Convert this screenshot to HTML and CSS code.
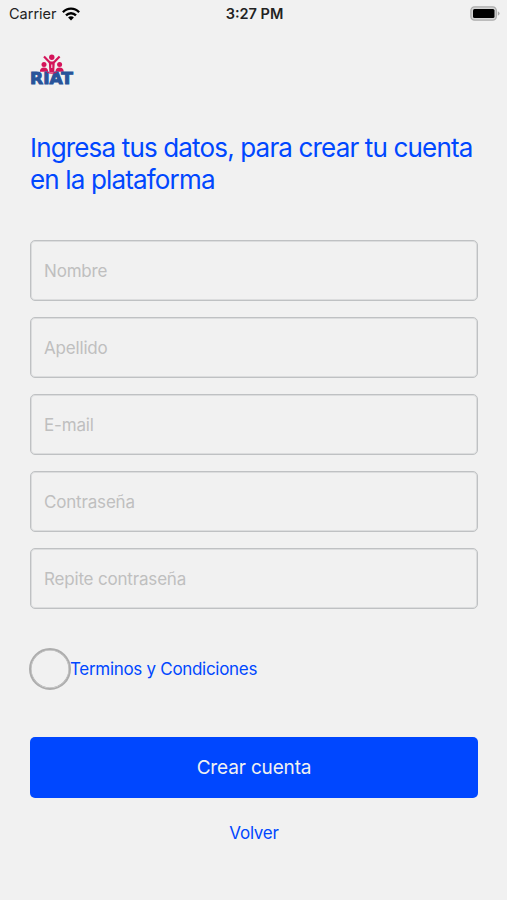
FILE: index.html
```html
<!DOCTYPE html>
<html lang="es">
<head>
    <meta charset="UTF-8">
    <meta name="viewport" content="width=device-width, initial-scale=1.0">
    <title>RIAT - Crear cuenta</title>
    <link rel="stylesheet" href="styles.css">
</head>
<body>
    <header class="status-bar">
        <div class="carrier">
            <span>Carrier</span>
            <svg class="wifi" width="18" height="14" viewBox="0 0 18 14" fill="none" stroke="#000" stroke-width="2.3">
                <path d="M0.9 5.3C5.4 0.5 12.6 0.5 17.1 5.3"/>
                <path d="M4 8.4C6.8 5.5 11.2 5.5 14 8.4"/>
                <path d="M6.1 10.5C7.7 8.9 10.3 8.9 11.9 10.5L9 13.5Z" fill="#000" stroke="none"/>
            </svg>
        </div>
        <div class="time">3:27 PM</div>
        <svg class="battery" width="30" height="15" viewBox="0 0 30 15">
            <rect x="0.9" y="0.9" width="25.4" height="13.2" rx="3.6" fill="#d4d4d4" stroke="#ababab" stroke-width="1.3"/>
            <rect x="3" y="3" width="21.5" height="9" rx="1.5" fill="#000"/>
            <path d="M27.8 5.2Q29.6 6 29.6 7.5T27.8 9.8Z" fill="#a6a6a6"/>
        </svg>
    </header>

    <main class="register">
        <svg class="logo" width="44" height="33" viewBox="0 0 44 33">
            <g fill="#d4145a">
                <circle cx="21.8" cy="3.2" r="2.7"/>
                <circle cx="14" cy="10.4" r="2.5"/>
                <circle cx="29.6" cy="10.4" r="2.5"/>
                <path d="M9.8 17.8C10 14.6 11.6 13.4 14 13.4S18 14.6 18.2 17.8Z"/>
                <path d="M25.4 17.8C25.6 14.6 27.2 13.4 29.6 13.4S33.6 14.6 33.8 17.8Z"/>
                <path d="M18.8 7.6H24.8L24.2 18.5H19.4Z"/>
            </g>
            <path d="M14 2.5L19.8 8.4M29.6 2.5L23.8 8.4" fill="none" stroke="#d4145a" stroke-width="2.2"/>
            <path d="M21.8 10.5V14" stroke="#f1f1f1" stroke-width="1"/>
            <text class="logo-text" x="0" y="30.4" textLength="43" lengthAdjust="spacingAndGlyphs">RIAT</text>
            <path d="M17 18.2Q21.8 20.2 26.6 18.2" fill="none" stroke="#d4145a" stroke-width="1.1"/>
        </svg>

        <h1>Ingresa tus datos, para crear tu cuenta en la plataforma</h1>

        <form>
            <div class="fields">
                <input type="text" placeholder="Nombre">
                <input type="text" placeholder="Apellido">
                <input type="email" placeholder="E-mail">
                <input type="password" placeholder="Contraseña">
                <input type="password" placeholder="Repite contraseña">
            </div>

            <div class="terms">
                <input type="checkbox" id="terms" aria-label="Terminos y Condiciones">
                <a href="#">Terminos y Condiciones</a>
            </div>

            <button class="submit-btn" type="button">Crear cuenta</button>
        </form>

        <a class="back-link" href="#">Volver</a>
    </main>
</body>
</html>
```
FILE: styles.css
```css
* { box-sizing: border-box; }
body { margin: 0; min-height: 900px; background: #f1f1f1; font-family: Inter, "Liberation Sans", sans-serif; color: #0047ff; }
a { color: inherit; text-decoration: none; }

.status-bar { display: grid; grid-template-columns: 1fr auto 1fr; align-items: center; height: 27px; padding: 0 7px 0 9px; color: #222; font-size: 14.5px; }
.carrier { display: flex; align-items: center; gap: 5px; }
.time { font-weight: 600; font-size: 14.5px; }
.battery { justify-self: end; }

.register { display: flex; flex-direction: column; padding: 27px 29px 0 30px; }
.logo { display: block; overflow: visible; }
.logo-text { font-family: "DejaVu Sans", sans-serif; font-weight: 700; font-size: 16.5px; fill: #28549a; stroke: #28549a; stroke-width: 1; }

h1 { margin: 45px 0 0; font-size: 26px; font-weight: 400; line-height: 32px; letter-spacing: -0.84px; }

.fields { display: flex; flex-direction: column; gap: 16px; margin-top: 44px; }
.fields input { width: 100%; height: 61px; padding: 0 13px; border: 1px solid #bfc1c3; border-radius: 5px; background: transparent; box-shadow: inset 0 0 0 1px #dcddde; font: 17px Inter, sans-serif; letter-spacing: -0.18px; outline: none; }
.fields input::placeholder { color: #bfbfbf; opacity: 1; }

.terms { display: flex; align-items: center; margin: 39px 0 0 -1px; font-size: 17px; letter-spacing: -0.3px; }
.terms input { appearance: none; width: 42px; height: 42px; margin: 0; border: 2px solid #adadad; border-radius: 50%; box-shadow: inset 0 0 0 0.5px #adadad; }
.terms a { margin-left: -1px; }

.submit-btn { display: block; width: 100%; height: 61px; margin-top: 47px; padding: 0; border: none; border-radius: 5px; background: #0047ff; color: #f1f1f1; font: 19px Inter, sans-serif; letter-spacing: -0.15px; cursor: pointer; }
.back-link { align-self: center; margin-top: 25px; font-size: 17px; line-height: 21px; letter-spacing: -0.25px; }
```
